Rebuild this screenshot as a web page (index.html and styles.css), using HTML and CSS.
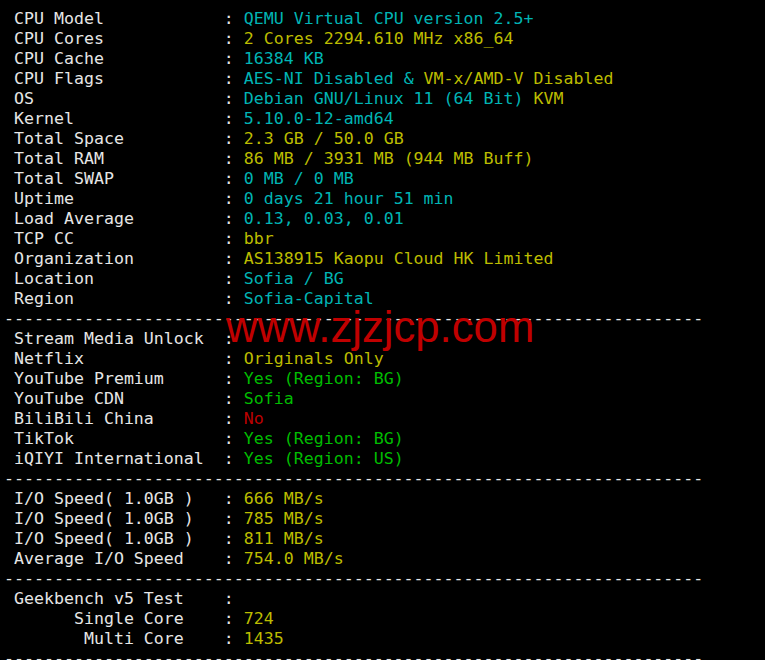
FILE: index.html
```html
<!DOCTYPE html>
<html>
<head>
<meta charset="utf-8">
<link rel="stylesheet" href="styles.css">
</head>
<body>
<main class="term">
<pre class="out"> CPU Model            : <span class="c">QEMU Virtual CPU version 2.5+</span>
 CPU Cores            : <span class="y">2 Cores 2294.610 MHz x86_64</span>
 CPU Cache            : <span class="c">16384 KB</span>
 CPU Flags            : <span class="c">AES-NI Disabled &amp; </span><span class="y">VM-x/AMD-V Disabled</span>
 OS                   : <span class="c">Debian GNU/Linux 11 (64 Bit) </span><span class="y">KVM</span>
 Kernel               : <span class="c">5.10.0-12-amd64</span>
 Total Space          : <span class="y">2.3 GB / 50.0 GB</span>
 Total RAM            : <span class="y">86 MB / 3931 MB (944 MB Buff)</span>
 Total SWAP           : <span class="c">0 MB / 0 MB</span>
 Uptime               : <span class="c">0 days 21 hour 51 min</span>
 Load Average         : <span class="c">0.13, 0.03, 0.01</span>
 TCP CC               : <span class="y">bbr</span>
 Organization         : <span class="y">AS138915 Kaopu Cloud HK Limited</span>
 Location             : <span class="c">Sofia / BG</span>
 Region               : <span class="c">Sofia-Capital</span>
----------------------------------------------------------------------
 Stream Media Unlock  :
 Netflix              : <span class="y">Originals Only</span>
 YouTube Premium      : <span class="g">Yes (Region: BG)</span>
 YouTube CDN          : <span class="g">Sofia</span>
 BiliBili China       : <span class="r">No</span>
 TikTok               : <span class="g">Yes (Region: BG)</span>
 iQIYI International  : <span class="g">Yes (Region: US)</span>
----------------------------------------------------------------------
 I/O Speed( 1.0GB )   : <span class="y">666 MB/s</span>
 I/O Speed( 1.0GB )   : <span class="y">785 MB/s</span>
 I/O Speed( 1.0GB )   : <span class="y">811 MB/s</span>
 Average I/O Speed    : <span class="y">754.0 MB/s</span>
----------------------------------------------------------------------
 Geekbench v5 Test    :
       Single Core    : <span class="y">724</span>
        Multi Core    : <span class="y">1435</span>
----------------------------------------------------------------------</pre>
<div class="mark">www.zjzjcp.com</div>
</main>
</body>
</html>
```

FILE: styles.css
```css
html, body {
  margin: 0;
  padding: 0;
  background: #000;
}
.term {
  position: relative;
  width: 765px;
  height: 660px;
  overflow: hidden;
  background: #000;
  padding: 9px 0 0 4px;
  box-sizing: border-box;
}
.out {
  margin: 0;
  font-family: "DejaVu Sans Mono", monospace;
  font-size: 16.6px;
  line-height: 20px;
  color: #e6e6e6;
  white-space: pre;
}
.c { color: #00b4b4; }
.y { color: #bcbc00; }
.g { color: #00bc00; }
.r { color: #bc0000; }
.mark {
  position: absolute;
  left: 226px;
  top: 305px;
  font-family: "Liberation Sans", Arial, sans-serif;
  font-size: 43.7px;
  line-height: 1;
  color: #c00000;
  white-space: nowrap;
}
```
